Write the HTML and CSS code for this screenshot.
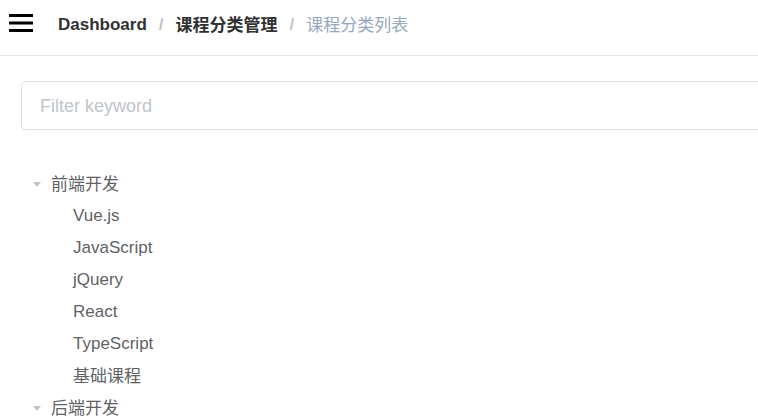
FILE: index.html
```html
<!DOCTYPE html>
<html lang="zh">
<head>
<meta charset="utf-8">
<title>课程分类列表</title>
<link rel="stylesheet" href="styles.css">
</head>
<body>
<header class="navbar">
  <div class="hamburger">
    <svg width="24" height="20" viewBox="0 0 24 20"><rect x="0" y="1" width="24" height="3" fill="#000"/><rect x="0" y="8.5" width="24" height="3" fill="#000"/><rect x="0" y="16" width="24" height="3" fill="#000"/></svg>
  </div>
  <nav class="breadcrumb">
    <span class="crumb strong">Dashboard</span>
    <span class="sep">/</span>
    <span class="crumb strong zh">课程分类管理</span>
    <span class="sep">/</span>
    <span class="crumb current zh">课程分类列表</span>
  </nav>
</header>
<main class="app-main">
  <div class="filter">
    <input class="filter-input" type="text" placeholder="Filter keyword">
  </div>
  <ul class="tree">
    <li class="node">
      <div class="row"><span class="caret"></span><span class="label zh">前端开发</span></div>
      <ul class="children">
        <li class="row child"><span class="label">Vue.js</span></li>
        <li class="row child"><span class="label">JavaScript</span></li>
        <li class="row child"><span class="label">jQuery</span></li>
        <li class="row child"><span class="label">React</span></li>
        <li class="row child"><span class="label">TypeScript</span></li>
        <li class="row child"><span class="label zh">基础课程</span></li>
      </ul>
    </li>
    <li class="node">
      <div class="row"><span class="caret"></span><span class="label zh">后端开发</span></div>
      <ul class="children">
        <li class="row child"><span class="label">Java</span></li>
        <li class="row child"><span class="label">Python</span></li>
      </ul>
    </li>
  </ul>
</main>
</body>
</html>
```
FILE: styles.css
```css
html, body {
  margin: 0;
  padding: 0;
  overflow: hidden;
  background: #fff;
  font-family: "Liberation Sans", Arial, "Noto Sans CJK SC", sans-serif;
}
.navbar {
  height: 55px;
  border-bottom: 1px solid #e6e6e6;
  display: flex;
  align-items: center;
  box-sizing: content-box;
}
.hamburger {
  width: 24px;
  height: 20px;
  margin-left: 9px;
  margin-top: -9px;
  display: flex;
}
.breadcrumb {
  margin-left: 25px;
  margin-top: -6px;
  display: flex;
  align-items: center;
  font-size: 17px;
}
.crumb.strong {
  font-weight: bold;
  color: #303133;
}
.crumb.current {
  color: #97a8be;
}
.zh {
  margin-bottom: 3px;
}
.sep {
  color: #c0c4cc;
  font-weight: bold;
  margin: 0 12px 0 12px;
}
.app-main {
  padding: 25px 0 0 21px;
}
.filter {
  width: 800px;
}
.filter-input {
  display: block;
  width: 100%;
  height: 49px;
  box-sizing: border-box;
  border: 1px solid #dcdfe6;
  border-radius: 5px;
  padding: 2px 18px 0 18px;
  font-size: 18px;
  font-family: "Liberation Sans", Arial, "Noto Sans CJK SC", sans-serif;
  color: #606266;
  outline: none;
}
.filter-input::placeholder {
  color: #c0c4cc;
}
.tree {
  list-style: none;
  margin: 38px 0 0 0;
  padding: 0;
}
.tree ul {
  list-style: none;
  margin: 0;
  padding: 0;
}
.row {
  height: 32px;
  display: flex;
  align-items: center;
  font-size: 17px;
  color: #606266;
}
.caret {
  width: 0;
  height: 0;
  border-left: 4px solid transparent;
  border-right: 4px solid transparent;
  border-top: 5px solid #c0c4cc;
  margin-left: 12px;
  margin-right: 10px;
}
.child {
  padding-left: 52px;
}
```
